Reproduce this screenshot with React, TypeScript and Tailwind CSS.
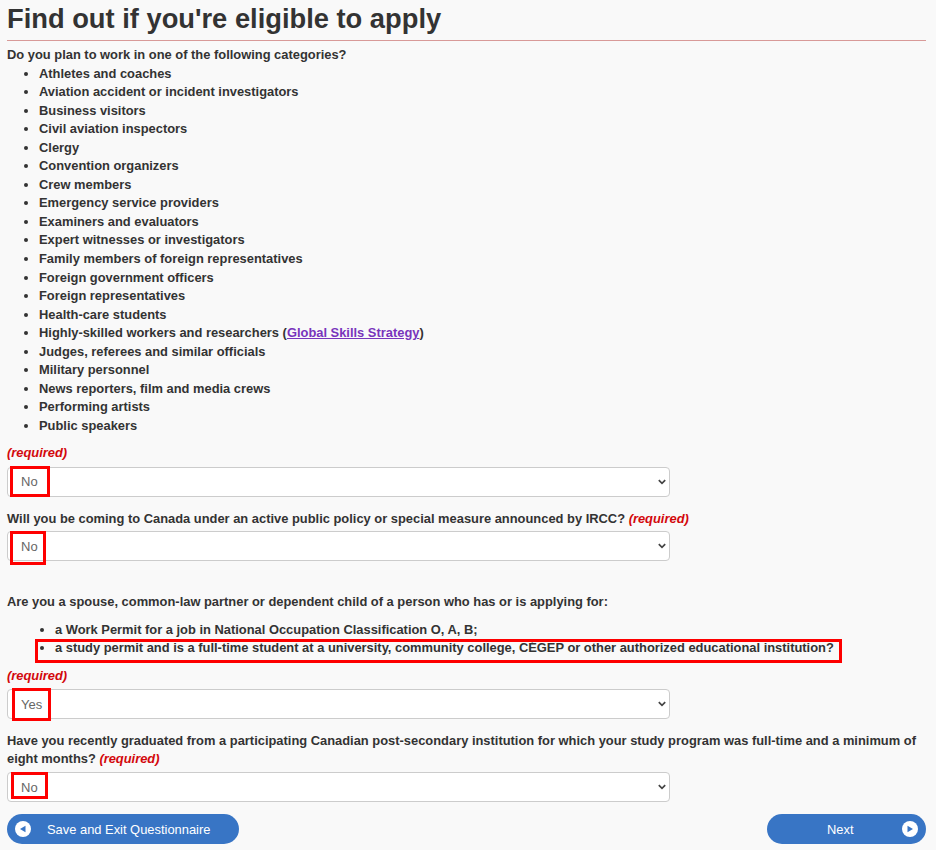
import React from "react";

const categories: React.ReactNode[] = [
  "Athletes and coaches",
  "Aviation accident or incident investigators",
  "Business visitors",
  "Civil aviation inspectors",
  "Clergy",
  "Convention organizers",
  "Crew members",
  "Emergency service providers",
  "Examiners and evaluators",
  "Expert witnesses or investigators",
  "Family members of foreign representatives",
  "Foreign government officers",
  "Foreign representatives",
  "Health-care students",
  <>
    Highly-skilled workers and researchers (
    <a href="#" className="text-[#7834bc] underline">Global Skills Strategy</a>)
  </>,
  "Judges, referees and similar officials",
  "Military personnel",
  "News reporters, film and media crews",
  "Performing artists",
  "Public speakers",
];

function Req() {
  return <em className="text-[#d3080c]">(required)</em>;
}

function Field({ value, box }: { value: string; box: string }) {
  return (
    <div className="relative w-[663px]">
      <select
        defaultValue={value}
        className="block w-[663px] h-[30px] appearance-none bg-white border border-[#cccccc] rounded-[4px] pl-[13px] pr-1 pt-[2px] text-[13px] font-normal text-[#666666]"
      >
        <option>{value}</option>
      </select>
      <svg width="8" height="6" viewBox="0 0 8 6" className="absolute right-[4px] top-[12px] pointer-events-none">
        <path d="M0.8 1.2 L4 4.4 L7.2 1.2" fill="none" stroke="#444444" strokeWidth="1.7" />
      </svg>
      <div className={box} />
    </div>
  );
}

function PlayIcon({ dir }: { dir: "left" | "right" }) {
  return (
    <svg width="16" height="16" viewBox="0 0 16 16" className="shrink-0">
      <circle cx="8" cy="8" r="8" fill="#ffffff" />
      {dir === "left" ? (
        <path d="M5 8 L10.5 4.8 V11.2 Z" fill="#3875c5" />
      ) : (
        <path d="M11 8 L5.5 4.8 V11.2 Z" fill="#3875c5" />
      )}
    </svg>
  );
}

export default function App() {
  return (
    <div className="w-[936px] h-[850px] overflow-hidden bg-[#f9f9f9] pl-[7px] pr-[10px] text-[#333333] text-[12.9px] leading-[18.55px] font-bold font-['Liberation_Sans',Arial,sans-serif]">
      <h1 className="text-[27.3px] leading-[32px] font-bold pt-[3px] pb-[4.5px] border-b border-[#d89a98] text-[#333333]">
        Find out if you're eligible to apply
      </h1>
      <p className="mt-[5.5px]">Do you plan to work in one of the following categories?</p>
      <ul className="list-disc pl-[32px]">
        {categories.map((c, i) => (
          <li key={i}>{c}</li>
        ))}
      </ul>
      <p className="mt-[9px] mb-[3.5px]"><Req /></p>
      <Field value="No" box="absolute left-[3px] top-[-1px] w-[40px] h-[31px] border-[3px] border-[#fe0000] box-border" />
      <p className="mt-[13.5px] mb-[2.5px]">
        Will you be coming to Canada under an active public policy or special measure announced by IRCC? <Req />
      </p>
      <Field value="No" box="absolute left-[3px] top-[0px] w-[36px] h-[34px] border-[3px] border-[#fe0000] box-border" />
      <p className="mt-[31.5px]">Are you a spouse, common-law partner or dependent child of a person who has or is applying for:</p>
      <div className="relative mt-[9.5px]">
        <ul className="list-disc pl-[48px]">
          <li>a Work Permit for a job in National Occupation Classification O, A, B;</li>
          <li>a study permit and is a full-time student at a university, community college, CÉGEP or other authorized educational institution?</li>
        </ul>
        <div className="absolute left-[28px] top-[18px] w-[807px] h-[24px] border-[3px] border-[#fe0000] box-border" />
      </div>
      <p className="mt-[9.5px] mb-[3.5px]"><Req /></p>
      <Field value="Yes" box="absolute left-[5px] top-[-1px] w-[39px] h-[33px] border-[3px] border-[#fe0000] box-border" />
      <p className="mt-[12.5px] mb-[3.5px]">
        Have you recently graduated from a participating Canadian post-secondary institution for which your study program was full-time and a minimum of eight months? <Req />
      </p>
      <Field value="No" box="absolute left-[4px] top-[0px] w-[37px] h-[27px] border-[3px] border-[#fe0000] box-border" />
      <div className="flex justify-between mt-[12px]">
        <button className="w-[232px] h-[30px] rounded-[15px] bg-[#3875c5] text-white text-[12.9px] font-normal flex items-center pl-[8px]">
          <PlayIcon dir="left" />
          <span className="ml-[16px] pt-[1px]">Save and Exit Questionnaire</span>
        </button>
        <button className="w-[159px] h-[30px] rounded-[15px] bg-[#3875c5] text-white text-[12.9px] font-normal flex items-center pr-[8px]">
          <span className="ml-[60px] pt-[1px]">Next</span>
          <span className="ml-auto"><PlayIcon dir="right" /></span>
        </button>
      </div>
    </div>
  );
}
